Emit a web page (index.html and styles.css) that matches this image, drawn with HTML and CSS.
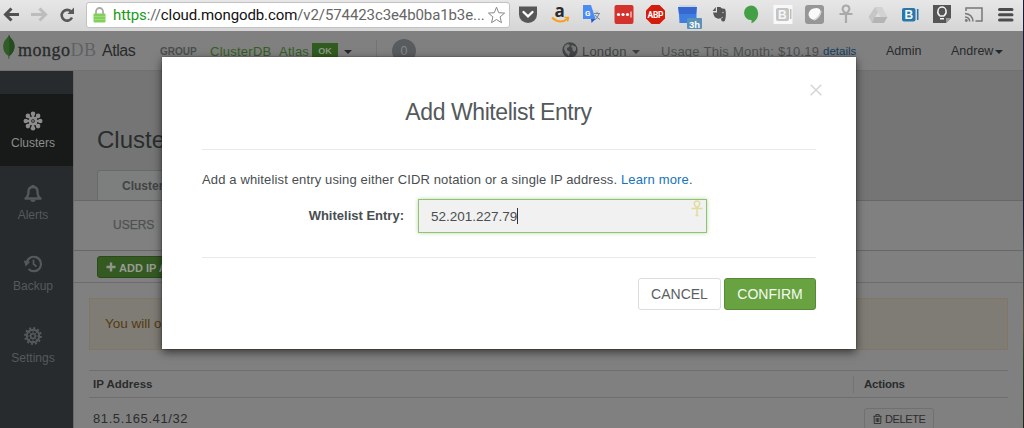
FILE: index.html
```html
<!DOCTYPE html>
<html lang="en">
<head>
<meta charset="utf-8">
<title>MongoDB Atlas</title>
<link rel="stylesheet" href="styles.css">
</head>
<body>
<div class="window">
<header class="browser">
  <div class="nav-icons">
    <svg width="80" height="31" viewBox="0 0 80 31" fill="none">
      <path d="M19 14.500H6M11.500 8.500l-6 6 6 6" stroke="#505050" stroke-width="3"/>
      <path d="M31 14.500h13M39.500 8.500l6 6-6 6" stroke="#bdbdbd" stroke-width="3"/>
      <path d="M72 17.500a5.400 5.400 0 1 1-1-6" stroke="#595959" stroke-width="2.600"/>
      <path d="M74 7.500v6.600h-6.600z" fill="#595959"/>
    </svg>
  </div>
  <div class="address">
    <svg class="lock" width="13" height="16" viewBox="0 0 13 16"><path d="M3 7V4.500a3.500 3.500 0 0 1 7 0V7" fill="none" stroke="#a9a9a9" stroke-width="1.800"/><rect x=".5" y="6.500" width="12" height="9" rx="1" fill="#83cf5c"/><path d="M1 9.500h11M1 12.500h11" stroke="#9bdd78"/></svg>
    <span class="url"><span class="secure">https</span>://<span class="host">cloud.mongodb.com</span>/v2/574423c3e4b0ba1b3e...</span>
    <svg class="star" width="19" height="18" viewBox="0 0 19 18"><path d="M9.500 1.200l2.200 5.500 5.900.4-4.500 3.800 1.400 5.800-5-3.200-5 3.200 1.400-5.800L1.400 7.100l5.900-.4z" fill="#fff" stroke="#888"/></svg>
  </div>
  <svg class="extensions" width="509" height="31" viewBox="0 0 509 31">
    <path d="M5 6.500h18v8a9 8.500 0 0 1-18 0z" fill="#575757"/><path d="M9.500 12l4.500 4.300L18.500 12" fill="none" stroke="#fff" stroke-width="2.400" stroke-linecap="round"/>
    <text x="40.500" y="16.500" class="amazon">a</text><path d="M38 17.500q8 7.500 16 1" fill="none" stroke="#f5a023" stroke-width="2"/><path d="M50.500 17.500h4l-1 4" fill="none" stroke="#f5a023" stroke-width="1.400"/>
    <g transform="translate(1.500)"><path d="M73 10h10v12l-5 1z" fill="#d9d9d9"/><path d="M67.500 5h8l4.500 14H67.500z" fill="#4a8cf0"/><path d="M75.500 19H80l-4 4z" fill="#3450bd"/><text x="69.500" y="15.500" class="g">G</text><path d="M78.500 13.500h6M81.500 12v1.500M83.500 14q-2 5-4 5.500M79.500 15q2 3 5 4.500" fill="none" stroke="#6f879f"/></g>
    <g transform="translate(1.500)"><rect x="99" y="5" width="19" height="19" rx="2" fill="#d4322c"/><circle cx="103" cy="14.500" r="1.600" fill="#fff"/><circle cx="107.500" cy="14.500" r="1.600" fill="#fff"/><circle cx="112" cy="14.500" r="1.600" fill="#fff"/><path d="M115.500 11.500v6" stroke="#fff"/></g>
    <path d="M137.500 5h8l5.500 5.500v8L145.500 24h-8l-5.500-5.500v-8z" fill="#d51b0c"/><text x="133.500" y="17.500" class="abp" textLength="16">ABP</text>
    <path d="M164.500 7h18v16h-17z" fill="#3f7ee0"/><path d="M164 7h19l-1 7h-17z" fill="#3569d0"/><path d="M165 6h17" stroke="#b9c8e4"/><rect x="173" y="18" width="15" height="11" rx="1" fill="#5c91b7"/><text x="175" y="27.500" class="hours">3h</text>
    <g transform="translate(39.800) scale(.8 1)"><path d="M198.500 11l4-4v4zM204 7h4q2 2 5 1.600 1.800.3 2 3.400.4 6-1.400 9-3.600 1.500-4.500-1.300 0-2.400 2.500-2.200-1-2-2.400.8-4.200.7-5.200 0Q200.500 18 199 12.500h5z" fill="#555"/><circle cx="211.500" cy="12.500" r=".8" fill="#ddd"/></g>
    <path d="M237 5.500a7.200 8 0 0 1 7.200 8q-.3 7-6.700 9.800v-3.200a7.200 7.300 0 1 1-.5-14.600z" fill="#43a047"/>
    <g transform="translate(-4)">
      <rect x="263.500" y="5" width="19" height="19" fill="#f8f8f8"/><rect x="266" y="8" width="13" height="13" rx="2" fill="#c4c4c4"/><text x="268" y="19" class="bi">B</text><path d="M280.700 9v10" stroke="#bbb" stroke-width="1.500"/>
      <rect x="295" y="5" width="19" height="19" rx="3" fill="#969696"/><path d="M298.500 14q1-6 8-6 5 0 4 6-2 5-6 6-6-1-6-6z" fill="#fafafa"/><path d="M304 20q6-3 7-9" fill="none" stroke="#d5d5d5" stroke-width="1.500"/>
      <path d="M336 14q-4-4-3.300-6 .8-2.500 3.300-2.500T339.300 8q.7 2-3.300 6zm-6.500 0h13M336 14v9" fill="none" stroke="#aaa" stroke-width="2.200"/>
      <g transform="translate(-.5)"><path d="M365.500 7h7l-7 10-3 6-3.500-6z" fill="#c6c6c6"/><path d="M365.500 7h7l5.500 10h-7z" fill="#d2d2d2"/><path d="M365 17h13l-3.500 6h-12z" fill="#b4b4b4"/></g>
      <rect x="392" y="8" width="13.500" height="13.500" rx="2" fill="#2778a9"/><text x="394.500" y="19.200" class="b">B</text><path d="M407.700 9v11" stroke="#2778a9" stroke-width="1.600"/>
      <path d="M423 5h18v13l-5 5h-13z" fill="#555"/><path d="M436 23v-5h5z" fill="#999"/><path d="M430 16q-3-2.500-2-5a4 4 0 0 1 8 0q.8 2.500-2.200 5zM430 18.700h4" fill="none" stroke="#f4f4f4" stroke-width="1.500"/>
      <path d="M456 11V8h16v13h-6.500M455 13.500q7.500.5 8 8M455 17q4.500.3 4.700 4.500" fill="none" stroke="#777" stroke-width="1.500"/><circle cx="456.300" cy="20.500" r="1.400" fill="#777"/>
      <path d="M489.500 9.500h12.500M489.500 14.700h12.500M489.500 19.900h12.500" stroke="#4c4c4c" stroke-width="3" stroke-linecap="round"/>
    </g>
  </svg>
</header>

<div class="topbar">
  <svg class="leaf" width="12" height="26" viewBox="0 0 12 26"><path d="M6 .5Q6.500 3 9 5.500q3 3.500 2.500 8T6.500 22L6.300 25h-.8L5.300 22Q.5 19 .2 13 0 8 3 5 5.500 2.500 6 .5z" fill="#315b27"/><path d="M6 .5Q6.500 3 9 5.500q3 3.500 2.500 8T6.500 22z" fill="#254c20"/></svg>
  <span class="wordmark">mongo<span class="db">DB</span></span>
  <span class="atlas">Atlas</span>
  <span class="group-label">GROUP</span>
  <span class="group-name">ClusterDB_Atlas</span>
  <span class="ok">OK</span>
  <span class="caret dark"></span>
  <span class="split"></span>
  <span class="count">0</span>
  <svg class="globe" width="16" height="16" viewBox="0 0 16 16"><circle cx="8" cy="8" r="7.700" fill="#424546"/><path d="M2.500 4l3-2 2.500 1-1 2-2 1v2l3 2-1 4-3-3-2-4zM10 3l4 2v3l-2 2-2-3 1-1-2-1z" fill="#777"/></svg>
  <span class="london">London</span>
  <span class="caret mid"></span>
  <span class="usage">Usage This Month: $10.19</span>
  <span class="details">details</span>
  <span class="admin">Admin</span>
  <span class="andrew">Andrew</span>
  <span class="caret dark"></span>
</div>

<div class="body">
  <nav class="sidebar">
    <div class="item active">
      <svg width="20" height="20" viewBox="-10 -10 20 20" fill="#8c8c8c"><path d="M0-8V8M-8 0H8M-5.600-5.600 5.600 5.600M5.600-5.600-5.600 5.600" stroke="#8c8c8c" stroke-width="2.200"/><circle r="4.500"/><circle cy="-7.200" r="2.300"/><circle cy="7.200" r="2.300"/><circle cx="-7.200" r="2.300"/><circle cx="7.200" r="2.300"/><circle cx="-5.100" cy="-5.100" r="2.300"/><circle cx="5.100" cy="5.100" r="2.300"/><circle cx="5.100" cy="-5.100" r="2.300"/><circle cx="-5.100" cy="5.100" r="2.300"/><circle r="1.800" fill="#181a19"/><circle r=".9"/></svg>
      <span>Clusters</span>
    </div>
    <div class="item">
      <svg width="20" height="20" viewBox="0 0 20 20"><path d="M2.500 15.500q3-2 3-7 0-4.500 4.500-4.500t4.500 4.500q0 5 3 7z" fill="none" stroke="#56595b" stroke-width="2.400" stroke-linejoin="round"/><path d="M7 16.500h6q-.8 2.500-3 2.500t-3-2.500zM8.600 2h2.800v2H8.600z" fill="#56595b"/></svg>
      <span>Alerts</span>
    </div>
    <div class="item">
      <svg width="20" height="20" viewBox="0 0 20 20" fill="none" stroke="#56595b"><path d="M3.600 9.500a7.200 7.200 0 1 1 2 5.500" stroke-width="2.200"/><path d="M10.500 5.500V10l3 2.500" stroke-width="1.700"/><path d="M.8 6.500l6.400 1.200-4.500 4.800z" fill="#56595b" stroke="none"/></svg>
      <span>Backup</span>
    </div>
    <div class="item">
      <svg width="20" height="20" viewBox="-10 -10 20 20" fill="none" stroke="#56595b"><circle r="6.300" stroke-width="1.900"/><circle r="7.900" stroke-width="2" stroke-dasharray="2.070 2.066"/><circle r="2.300" stroke-width="1.600"/><path d="M0-6v4M0 2v4M-6 0h4M2 0h4M-4.300-4.300l2.700 2.700M4.300 4.300 1.600 1.600M4.300-4.300 1.600-1.600M-4.300 4.300l2.700-2.700" stroke-width="1"/></svg>
      <span>Settings</span>
    </div>
  </nav>
  <main class="main">
    <div class="heading">
      <h1>Clusters</h1>
      <div class="tab">Clusters</div>
    </div>
    <div class="subtabs"><span>USERS</span></div>
    <div class="toolbar"><button class="add"><svg width="10" height="10" viewBox="0 0 10 10"><path d="M5 .5v9M.5 5h9" stroke="#8f948d" stroke-width="2.400"/></svg><span>ADD IP ADDRESS</span></button></div>
    <div class="content">
      <div class="notice">You will only</div>
      <div class="table">
        <div class="thead"><span class="ip-head">IP Address</span><span class="act-head">Actions</span></div>
        <div class="trow"><span class="ip">81.5.165.41/32</span>
          <span class="act"><button class="delete"><svg width="9" height="10" viewBox="0 0 9 10" fill="none" stroke="#2b2d2e"><path d="M.3 2.300h8.400M2.800 2V.6h3.400V2M1.200 2.500v7h6.600v-7M3.200 4v4M4.500 4v4M5.800 4v4" stroke-width=".9"/></svg><span>DELETE</span></button></span></div>
      </div>
    </div>
  </main>
</div>
<div class="desktop-edge"></div>

<div class="modal">
  <svg class="close" width="12" height="12" viewBox="0 0 12 12"><path d="M.7.7l10.600 10.600M11.300.7.700 11.300" stroke="#d4d4d4" stroke-width="1.400"/></svg>
  <h2>Add Whitelist Entry</h2>
  <div class="modal-body">
    <p>Add a whitelist entry using either CIDR notation or a single IP address. <a>Learn more</a>.</p>
    <div class="field">
      <label>Whitelist Entry:</label>
      <div class="input"><span>52.201.227.79</span><i class="cursor"></i>
        <svg class="key" width="12" height="17" viewBox="0 0 12 17"><path d="M6 8Q3.200 5 3.200 3.500 3.500 1 6 1t2.800 2.500Q8.800 5 6 8zM.5 8.500h11M6 8.500v7M4.500 15.500h3" fill="none" stroke="#dfdda0" stroke-width="1.500"/></svg>
      </div>
    </div>
  </div>
  <div class="actions"><button class="cancel">CANCEL</button><button class="confirm">CONFIRM</button></div>
</div>
</div>
</body>
</html>
```
FILE: styles.css
```css
* { box-sizing: border-box; }
body { margin: 0; font-family: "Liberation Sans", Arial, sans-serif; color: #2b2d2e; }
button { font: inherit; margin: 0; padding: 0; border: 0; }
svg { display: block; flex: none; }
span { white-space: nowrap; }
.window { position: relative; width: 1024px; height: 428px; overflow: hidden; background: #808080; }

.browser { display: flex; height: 31px; background: linear-gradient(#e7e7e7, #d5d5d5); }
.nav-icons { width: 86px; }
.address { display: flex; align-items: center; width: 424px; height: 26px; margin-top: 2px; padding-left: 6px; background: #fff; border: 1px solid #c2c2c2; border-radius: 3px; }
.lock { margin-top: -1px; }
.url { width: 374px; margin-left: 7px; font: 15px/22px Roboto, sans-serif; letter-spacing: -.1px; color: #666; }
.secure { color: #179b17; }
.host { color: #111; }
.extensions { margin-left: 4px; margin-right: -4px; }
.amazon { font: bold 17px "Open Sans", sans-serif; fill: #2b2b2b; }
.g { font: bold 8px Roboto, sans-serif; fill: #fff; }
.abp { font: bold 8.5px Roboto, sans-serif; fill: #fff; }
.hours { font: bold 9.5px "Liberation Sans", sans-serif; fill: #fff; }
.bi, .b { font: bold 12px "Liberation Sans", sans-serif; fill: #f6f6f6; }

.topbar { display: flex; height: 40px; padding-left: 3px; background: #808080; border-bottom: 1px solid #707070; font-size: 12.5px; line-height: 41px; }
.leaf { margin-top: 3px; }
.wordmark { width: 83px; margin-left: 3px; font: 18px/39px "Liberation Serif", serif; letter-spacing: .5px; color: #292b2b; -webkit-text-stroke: .3px #292b2b; }
.db { color: #606263; -webkit-text-stroke: 0; }
.atlas { width: 58px; margin-left: 1px; font-size: 16px; letter-spacing: -.45px; line-height: 40px; color: #292b2b; }
.group-label { width: 50px; font: bold 10px/42px "Liberation Sans", sans-serif; color: #4b4e4f; }
.group-name { width: 102px; font-size: 13px; letter-spacing: .25px; color: #345f20; }
.ok { width: 26px; height: 16px; margin-top: 12px; background: #315c1f; color: #8c9789; font-weight: bold; font-size: 9px; line-height: 16px; text-align: center; }
.caret { width: 0; height: 0; margin-top: 19px; border: 4px solid transparent; border-top-color: #25282a; border-bottom: 0; }
.ok + .caret { margin-left: 6px; }
.mid { border-top-color: #3d4041; }
.split { width: 1px; height: 22px; margin: 9px 15px 0 24px; background: #747474; }
.count { width: 24px; height: 24px; margin-top: 8px; border-radius: 50%; background: #595c5e; color: #868686; text-align: center; line-height: 24px; }
.globe { margin: 11px 4px 0 146px; }
.london { width: 50px; font-size: 13px; letter-spacing: .2px; color: #414445; }
.usage { width: 162px; margin-left: 21px; font-size: 13px; letter-spacing: .25px; color: #4d5051; }
.details { width: 63px; color: #123f62; font-size: 11.5px; }
.admin { width: 65px; color: #272a2b; }
.andrew { width: 44px; color: #272a2b; }

.body { display: flex; height: 357px; }
.sidebar { width: 73px; padding-top: 23px; background: #272b2e; }
.item { display: flex; flex-direction: column; align-items: center; height: 71.500px; padding: 17px 7px 0 0; font-size: 12px; color: #56595b; }
.item span { margin-top: 5px; line-height: 14px; }
.item.active { background: #181a19; color: #8c8c8c; }
.main { flex: 1; min-width: 0; border-left: 1px solid #696969; }
.heading { height: 130px; padding: 54px 0 0 23px; background: #757575; border-bottom: 1px solid #676767; }
h1 { height: 45px; margin: 0; font: 24px/30px "Liberation Sans", sans-serif; color: #292d2e; }
.tab { width: 110px; height: 30px; padding-left: 24px; background: #7d7f7e; border: 1px solid #686a69; border-bottom: 0; border-radius: 3px 0 0; font-weight: bold; font-size: 12px; line-height: 30px; color: #414445; }
.subtabs { height: 50px; padding-left: 39px; border-bottom: 1px solid #676767; font-size: 12px; letter-spacing: 0; line-height: 49px; color: #4e5152; -webkit-text-stroke: .25px #4e5152; }
.toolbar { height: 32px; padding: 5px 0 0 23px; border-bottom: 1px solid #6c6c6c; }
.add { display: flex; align-items: center; width: 130px; height: 22px; padding-left: 8px; background: #345a22; border: 1px solid #294a1a; border-radius: 3px; color: #979b95; font-weight: bold; font-size: 11px; }
.add span { margin-left: 3px; margin-top: 1px; }
.content { padding: 15px 16px 0 15px; }
.notice { height: 52px; padding-left: 15px; background: #7f7c76; border: 1px solid #827565; color: #523b10; font-size: 13.500px; line-height: 50px; }
.table { margin-top: 20px; }
.thead { display: flex; height: 28px; border: solid #6f6f6f; border-width: 1px 0; padding: 5px 0 4px 4px; font-weight: bold; font-size: 11.500px; line-height: 17px; color: #292c2d; }
.ip-head { width: 760px; }
.act-head { padding-left: 10px; border-left: 1px solid #737373; letter-spacing: -.2px; }
.trow { display: flex; padding: 10px 0 0 4px; }
.ip { width: 771px; padding-top: 1px; font-size: 13px; letter-spacing: .6px; line-height: 19px; }
.delete { display: flex; align-items: center; width: 70px; height: 22px; padding-left: 8px; background: #808080; border: 1px solid #707070; border-radius: 3px; font-size: 11px; letter-spacing: -.4px; color: #2b2d2e; }
.delete span { margin-left: 3px; }
.desktop-edge { position: absolute; top: 0; right: 0; width: 1px; height: 428px; background: linear-gradient(#1c1a36 0 52%, #354044 60%, #594a31 76%, #263a1c 85%, #20271b); }

.modal { position: absolute; left: 162px; top: 57px; width: 694px; height: 292px; padding: 0 40px; background: #fff; box-shadow: 0 3px 9px rgba(0,0,0,.6), 0 0 1px #333; color: #494e50; }
.close { position: absolute; left: 648px; top: 27px; }
h2 { height: 93px; margin: 0; padding-right: 21px; border-bottom: 1px solid #e8eaea; font: 23px/111px "Liberation Sans", sans-serif; letter-spacing: -.42px; text-align: center; color: #54595b; }
.modal-body { height: 108px; padding-top: 21px; border-bottom: 1px solid #e8eaea; }
.modal p { height: 28px; margin: 0; font-size: 13px; letter-spacing: .14px; line-height: 18px; white-space: nowrap; }
a { color: #1673bd; }
.field { display: flex; }
label { width: 216px; padding-right: 14px; text-align: right; font-weight: bold; font-size: 13px; line-height: 34px; white-space: nowrap; }
.input { position: relative; display: flex; align-items: center; width: 289px; height: 34px; padding-left: 12px; background: #f1f1f1; border: 1px solid #93c276; box-shadow: 0 0 4px #b8d7a5; font-size: 13.500px; }
.cursor { width: 1px; height: 16px; background: #333; }
.key { position: absolute; right: 3px; top: 0; }
.actions { display: flex; justify-content: flex-end; gap: 3px; padding-top: 20px; }
.actions button { height: 32px; border-radius: 3px; font-size: 14px; }
.cancel { width: 83px; background: #fff; border: 1px solid #d9dede; color: #5a5f61; }
.confirm { width: 92px; background: #69a341; border: 1px solid #568b35; color: #f5faf2; }
```
